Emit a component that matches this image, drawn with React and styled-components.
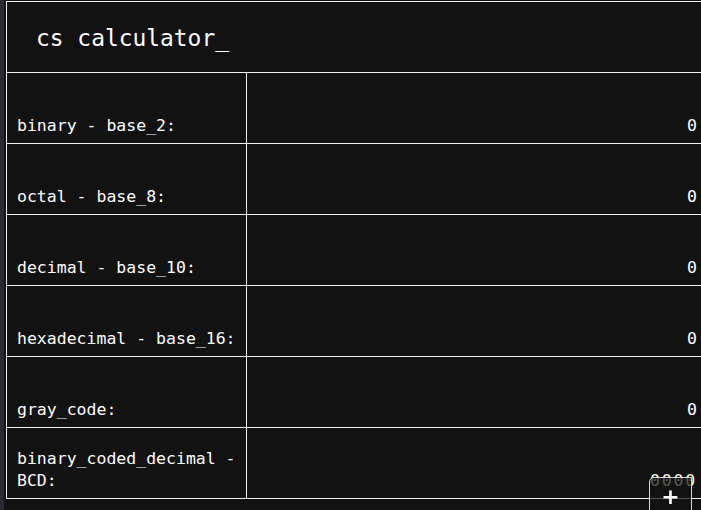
import React from 'react'
import styled, { createGlobalStyle } from 'styled-components'

const GlobalStyle = createGlobalStyle`
    html, body {
        margin: 0;
        padding: 0;
        background: #121212;
        overflow: hidden;
    }
    body {
        font-family: "DejaVu Sans Mono", "Liberation Mono", monospace;
        color: #ffffff;
    }
`;

const Page = styled.div`
    display: flex;
    height: 510px;
`;

const Strip = styled.div`
    width: 4px;
    flex-shrink: 0;
    background: #2a2b30;
`;

const Main = styled.div`
    padding: 1px 0 0 2px;
    flex-shrink: 0;
`;

const Table = styled.div`
    width: 700px;
    border: 1px solid #f2f2f2;
    border-right: none;
`;

const Header = styled.div`
    height: 70px;
    display: flex;
    align-items: center;
    padding-left: 29px;
    border-bottom: 1px solid #f2f2f2;
`;

const Title = styled.h1`
    margin: 0;
    font-size: 22.9px;
    font-weight: 400;
    padding-top: 2px;
`;

const Row = styled.div`
    display: grid;
    grid-template-columns: 239px 1px 1fr;
    height: 70px;
    border-bottom: ${p => (p.last ? 'none' : '1px solid #f2f2f2')};
`;

const Label = styled.div`
    display: flex;
    align-items: flex-end;
    padding: 0 8px 6px 10px;
    font-size: 16.5px;
    line-height: 22px;
`;

const Divider = styled.div`
    background: #f2f2f2;
`;

const Value = styled.div`
    display: flex;
    align-items: flex-end;
    justify-content: flex-end;
    padding: 0 10px 6px 0;
    font-size: 16.5px;
    line-height: 22px;
    letter-spacing: ${p => (p.wide ? '1.8px' : '0')};
`;

const AddButton = styled.button`
    position: fixed;
    right: 9px;
    bottom: -10px;
    width: 43px;
    height: 43px;
    border: 1px solid #d8d8d8;
    border-radius: 5px 0 0 0;
    background: rgba(18, 18, 18, 0.72);
    color: #ffffff;
    font-family: "DejaVu Sans", sans-serif;
    font-size: 22px;
    font-weight: 700;
    line-height: 1;
    padding: 0 0 3px 0;
    cursor: pointer;
`;

const rows = [
    { label: 'binary - base_2:', value: '0' },
    { label: 'octal - base_8:', value: '0' },
    { label: 'decimal - base_10:', value: '0' },
    { label: 'hexadecimal - base_16:', value: '0' },
    { label: 'gray_code:', value: '0' },
    { label: 'binary_coded_decimal - BCD:', value: '0000' },
];

const App = () => {
    return (
        <>
            <GlobalStyle />
            <Page>
                <Strip />
                <Main>
                    <Table>
                        <Header>
                            <Title>cs calculator_</Title>
                        </Header>
                        {rows.map((r, i) => (
                            <Row key={r.label} last={i === rows.length - 1}>
                                <Label>{r.label}</Label>
                                <Divider />
                                <Value wide={r.value.length > 1}>{r.value}</Value>
                            </Row>
                        ))}
                    </Table>
                </Main>
            </Page>
            <AddButton>+</AddButton>
        </>
    )
}

export default App
